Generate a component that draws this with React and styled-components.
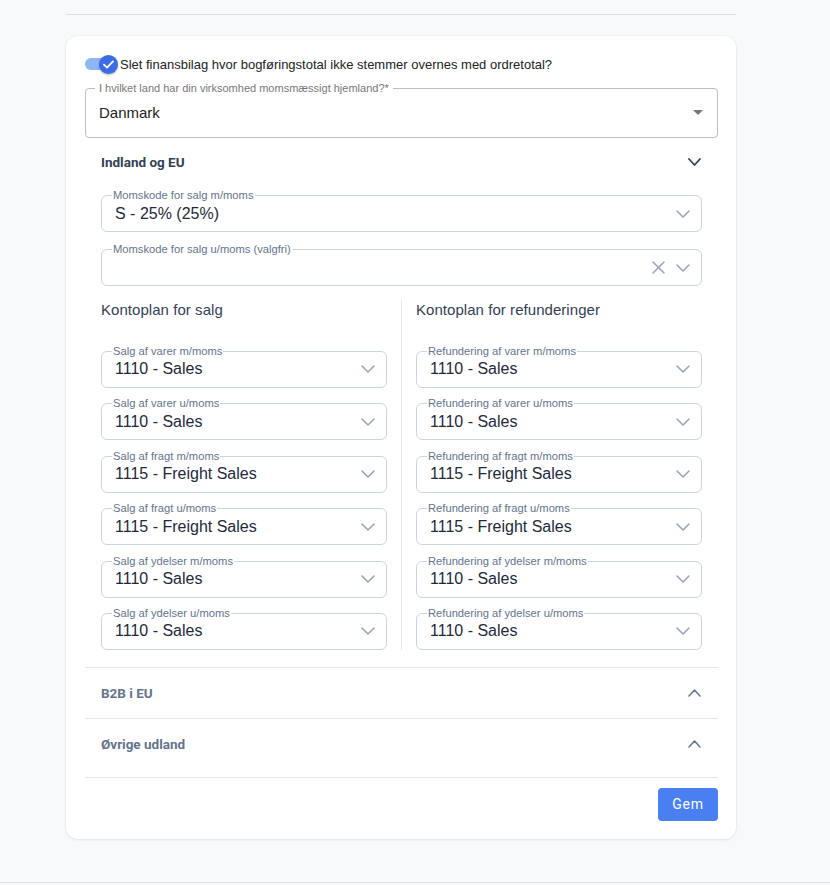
import React from "react";
import styled, { createGlobalStyle } from "styled-components";

const Global = createGlobalStyle`
  html, body { margin: 0; padding: 0; background: #f8f9fb; }
  body { font-family: "Liberation Sans", Arial, sans-serif; -webkit-font-smoothing: antialiased; }
  * { box-sizing: border-box; }
`;

const Page = styled.div`
  min-height: 885px;
  padding-top: 14px;
  display: flex;
  flex-direction: column;
`;

const TopRule = styled.div`
  width: 670px;
  margin-left: 66px;
  height: 1px;
  background: #dcdfe4;
`;

const Card = styled.section`
  width: 670px;
  margin: 21px 0 43px 66px;
  background: #fff;
  border-radius: 12px;
  box-shadow: 0 1px 3px rgba(15, 23, 42, 0.08), 0 0 0 1px rgba(15, 23, 42, 0.02);
  padding: 18px 18px 18px 19px;
  display: flex;
  flex-direction: column;
`;

const Footer = styled.footer`
  border-top: 1px solid #dcdfe4;
  height: 3px;
`;

const ToggleRow = styled.label`
  display: flex;
  align-items: center;
  height: 20px;
  gap: 2px;
  font-size: 13px;
  color: #222;
`;

const Switch = styled.span`
  position: relative;
  width: 33px;
  height: 20px;
  flex: none;
`;

const Track = styled.span`
  position: absolute;
  left: 0;
  top: 4px;
  width: 26px;
  height: 12px;
  border-radius: 6px;
  background: #8fb5f7;
`;

const Thumb = styled.span`
  position: absolute;
  right: 0;
  top: 1px;
  width: 19px;
  height: 19px;
  border-radius: 50%;
  background: #3b6ee6;
  box-shadow: 0 1px 2px rgba(0, 0, 0, 0.3);
  display: flex;
  align-items: center;
  justify-content: center;
`;

const CountryField = styled.div`
  position: relative;
  margin-top: 14px;
  height: 50px;
  border: 1px solid #bdbdbd;
  border-radius: 4px;
  display: flex;
  align-items: center;
  padding: 0 13px 1px 13px;
  font-size: 15px;
  color: #222;
`;

const CountryLabel = styled.span`
  position: absolute;
  left: 9px;
  top: -1px;
  transform: translateY(-50%);
  background: #fff;
  padding: 0 4px;
  font-size: 11px;
  line-height: 12px;
  color: #777;
  white-space: nowrap;
`;

const Value = styled.span`
  flex: 1;
  white-space: nowrap;
`;

const Accordion = styled.div`
  border-bottom: ${p => (p.$divider ? "1px solid #e2e8f0" : "none")};
  padding-bottom: ${p => p.$pb || 0}px;
`;

const AccHeader = styled.div`
  height: ${p => p.$h}px;
  padding: 0 17px 0 16px;
  display: flex;
  align-items: center;
  justify-content: space-between;
  font-family: Roboto, "Liberation Sans", Arial, sans-serif;
  font-weight: 700;
  font-size: 13.5px;
  color: ${p => (p.$open ? "#334155" : "#64748b")};
`;

const AccBody = styled.div`
  padding: 9px 16px 17px 16px;
  display: flex;
  flex-direction: column;
`;

const SelectBox = styled.div`
  position: relative;
  height: 37px;
  border: 1px solid #cbd5e1;
  border-radius: 6px;
  display: flex;
  align-items: center;
  gap: 11px;
  padding: 0 11px 0 13px;
  font-size: 16px;
  color: #1e293b;
  margin-top: ${p => p.$mt || 0}px;
`;

const SelectLabel = styled.span`
  position: absolute;
  left: 10px;
  top: -1px;
  transform: translateY(-50%);
  background: #fff;
  padding: 0 1px;
  font-size: 11.2px;
  line-height: 12px;
  color: #64748b;
  white-space: nowrap;
`;

const Columns = styled.div`
  margin-top: 14px;
  display: grid;
  grid-template-columns: 1fr 1px 1fr;
  column-gap: 14px;
`;

const Divider = styled.div`
  background: #e2e8f0;
`;

const Column = styled.div`
  display: flex;
  flex-direction: column;
  gap: 15.4px;
`;

const ColTitle = styled.h3`
  margin: 0 0 15.6px 0;
  height: 20px;
  line-height: 20px;
  font-weight: 400;
  font-size: 15px;
  letter-spacing: 0.05px;
  color: #334155;
`;

const Actions = styled.div`
  display: flex;
  justify-content: flex-end;
  margin-top: 10px;
`;

const Button = styled.button`
  width: 60px;
  height: 33px;
  border: none;
  border-radius: 4px;
  background: #4a7ff2;
  color: #fff;
  font-family: Roboto, "Liberation Sans", Arial, sans-serif;
  font-size: 14px;
  letter-spacing: 0.8px;
  cursor: pointer;
`;

const Chevron = ({ up, color = "#94a3b8", w = 14, h = 8, sw = 1.5 }) => (
  <svg width={w} height={h} viewBox={`0 0 ${w} ${h}`} fill="none" style={{ flex: "none" }}>
    <path
      d={up ? `M1 ${h - 1} L${w / 2} 1 L${w - 1} ${h - 1}` : `M1 1 L${w / 2} ${h - 1} L${w - 1} 1`}
      stroke={color}
      strokeWidth={sw}
      strokeLinecap="round"
      strokeLinejoin="round"
    />
  </svg>
);

const ClearIcon = () => (
  <svg width="13" height="13" viewBox="0 0 13 13" fill="none" style={{ flex: "none" }}>
    <path d="M1 1L12 12M12 1L1 12" stroke="#94a3b8" strokeWidth="1.5" strokeLinecap="round" />
  </svg>
);

const Select = ({ label, value, clearable, mt }) => (
  <SelectBox $mt={mt}>
    <SelectLabel>{label}</SelectLabel>
    <Value>{value}</Value>
    {clearable && <ClearIcon />}
    <Chevron />
  </SelectBox>
);

const sales = [
  ["Salg af varer m/moms", "1110 - Sales"],
  ["Salg af varer u/moms", "1110 - Sales"],
  ["Salg af fragt m/moms", "1115 - Freight Sales"],
  ["Salg af fragt u/moms", "1115 - Freight Sales"],
  ["Salg af ydelser m/moms", "1110 - Sales"],
  ["Salg af ydelser u/moms", "1110 - Sales"],
];

const refunds = [
  ["Refundering af varer m/moms", "1110 - Sales"],
  ["Refundering af varer u/moms", "1110 - Sales"],
  ["Refundering af fragt m/moms", "1115 - Freight Sales"],
  ["Refundering af fragt u/moms", "1115 - Freight Sales"],
  ["Refundering af ydelser m/moms", "1110 - Sales"],
  ["Refundering af ydelser u/moms", "1110 - Sales"],
];

export default function App() {
  return (
    <Page>
      <Global />
      <TopRule />
      <Card>
        <ToggleRow>
          <Switch>
            <Track />
            <Thumb>
              <svg width="11" height="9" viewBox="0 0 11 9" fill="none">
                <path d="M1 4.6L4 7.6L10 1.4" stroke="#fff" strokeWidth="1.8" strokeLinecap="round" strokeLinejoin="round" />
              </svg>
            </Thumb>
          </Switch>
          Slet finansbilag hvor bogføringstotal ikke stemmer overnes med ordretotal?
        </ToggleRow>

        <CountryField>
          <CountryLabel>I hvilket land har din virksomhed momsmæssigt hjemland?*</CountryLabel>
          <Value>Danmark</Value>
          <svg width="10" height="5" viewBox="0 0 10 5" style={{ marginRight: 1 }}>
            <path d="M0 0H10L5 5Z" fill="#777" />
          </svg>
        </CountryField>

        <Accordion $divider>
          <AccHeader $h={48} $open>
            Indland og EU
            <Chevron color="#334155" w={13} h={8} sw={1.8} />
          </AccHeader>
          <AccBody>
            <Select label="Momskode for salg m/moms" value="S - 25% (25%)" />
            <Select label="Momskode for salg u/moms (valgfri)" value="" clearable mt={17} />
            <Columns>
              <Column>
                <ColTitle>Kontoplan for salg</ColTitle>
                {sales.map(([l, v]) => (
                  <Select key={l} label={l} value={v} />
                ))}
              </Column>
              <Divider />
              <Column>
                <ColTitle>Kontoplan for refunderinger</ColTitle>
                {refunds.map(([l, v]) => (
                  <Select key={l} label={l} value={v} />
                ))}
              </Column>
            </Columns>
          </AccBody>
        </Accordion>

        <Accordion $divider>
          <AccHeader $h={50}>
            B2B i EU
            <Chevron up color="#64748b" w={13} h={8} sw={1.5} />
          </AccHeader>
        </Accordion>

        <Accordion $divider $pb={8}>
          <AccHeader $h={50}>
            Øvrige udland
            <Chevron up color="#64748b" w={13} h={8} sw={1.5} />
          </AccHeader>
        </Accordion>

        <Actions>
          <Button>Gem</Button>
        </Actions>
      </Card>
      <Footer />
    </Page>
  );
}
